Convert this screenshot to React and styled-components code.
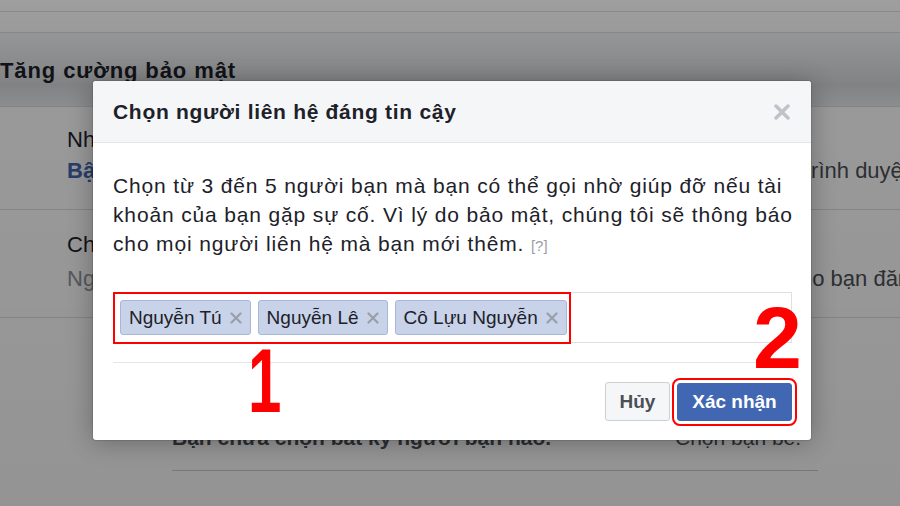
import React from "react";
import styled, { createGlobalStyle } from "styled-components";

const GlobalStyle = createGlobalStyle`
  html, body { margin: 0; padding: 0; }
  body { font-family: "Liberation Sans", Arial, sans-serif; background: #fff; }
  * { box-sizing: border-box; }
`;

const Page = styled.div`
  position: relative;
  width: 900px;
  height: 506px;
  overflow: hidden;
  background: #fff;
  color: #1d2129;
`;

const Settings = styled.div`
  display: flex;
  flex-direction: column;
`;

const Strip = styled.div`
  height: ${(p) => p.$h}px;
  border-bottom: 1px solid #dddfe2;
`;

const SectionHeading = styled.h2`
  margin: 0;
  height: 74px;
  padding-top: 25px;
  font-size: 22px;
  letter-spacing: 0.9px;
  line-height: 26px;
  font-weight: bold;
  color: #1d2129;
  border-bottom: 1px solid #dddfe2;
  background: linear-gradient(to bottom, #f6f7f9, #eceef1);
`;

const Row = styled.div`
  display: grid;
  grid-template-columns: ${(p) => p.$split}px 1fr;
  align-content: start;
  row-gap: ${(p) => p.$gap}px;
  padding: ${(p) => p.$pt}px 0 0 67px;
  height: ${(p) => p.$h}px;
  border-bottom: 1px solid #dddfe2;
  font-size: 22px;
  line-height: 28px;
  white-space: nowrap;
`;

const RowTitle = styled.div`
  grid-column: 1 / 3;
  color: #1d2129;
`;

const RowSub = styled.div`
  color: ${(p) => (p.$link ? "#4267b2" : "#90949c")};
  font-weight: ${(p) => (p.$link ? "bold" : "normal")};
  overflow: hidden;
`;

const RowAside = styled.div`
  color: #4b4f56;
`;

const Contacts = styled.div`
  padding: 0 82px 0 172px;
`;

const ContactsInner = styled.div`
  height: 153px;
  border-bottom: 1px solid #c9ccd1;
  display: grid;
  grid-template-columns: 503px 1fr;
  align-items: end;
  padding-bottom: 20px;
  font-size: 21px;
  white-space: nowrap;
`;

const Empty = styled.div`
  font-weight: bold;
  color: #4b4f56;
`;

const Pick = styled.div`
  color: #4b4f56;
`;

const Overlay = styled.div`
  position: absolute;
  inset: 0;
  background: linear-gradient(
    to bottom,
    rgba(0, 0, 0, 0.38) 0px,
    rgba(0, 0, 0, 0.4) 40px,
    rgba(0, 0, 0, 0.46) 85px,
    rgba(0, 0, 0, 0.4) 110px,
    rgba(0, 0, 0, 0.42) 506px
  );
`;

const Dialog = styled.div`
  position: absolute;
  left: 93px;
  top: 81px;
  width: 718px;
  height: 359px;
  background: #fff;
  border-radius: 3px;
  box-shadow: 0 2px 26px rgba(0, 0, 0, 0.3), 0 0 0 1px rgba(0, 0, 0, 0.1);
  display: flex;
  flex-direction: column;
`;

const Header = styled.div`
  height: 62px;
  flex: none;
  display: flex;
  align-items: center;
  justify-content: space-between;
  padding: 0 21px 0 20px;
  background: #f5f6f7;
  border-bottom: 1px solid #e5e5e5;
  border-radius: 3px 3px 0 0;
`;

const Title = styled.h3`
  margin: 0;
  font-size: 21px;
  letter-spacing: 0.7px;
  font-weight: bold;
  color: #1d2129;
  line-height: 26px;
`;

const Close = styled.button`
  border: 0;
  background: none;
  padding: 0;
  width: 16px;
  height: 16px;
  display: flex;
  cursor: pointer;
`;

const Body = styled.div`
  padding: 28px 19px 0 20px;
`;

const Text = styled.p`
  margin: 0;
  font-size: 21px;
  letter-spacing: 0.85px;
  line-height: 29px;
  color: #1d2129;
  white-space: nowrap;
`;

const Help = styled.span`
  font-size: 15px;
  letter-spacing: 0;
  color: #9a9ea6;
`;

const TokenBox = styled.div`
  position: relative;
  margin-top: 32px;
  height: 51px;
  border: 1px solid #dddfe2;
  display: flex;
  align-items: center;
  gap: 7px;
  padding: 0 6px;
`;

const Token = styled.span`
  display: inline-flex;
  align-items: center;
  gap: 8px;
  height: 35px;
  padding: 0 8px 0 8px;
  background: #c8d3ea;
  border: 1px solid #a6b7d8;
  border-radius: 3px;
  font-size: 19px;
  color: #1d2129;
  white-space: nowrap;
`;

const IconSvg = styled.svg`
  flex: none;
  display: block;
`;

const Highlight = styled.div`
  position: absolute;
  left: -1px;
  top: -1px;
  width: 458px;
  height: 52px;
  border: 2px solid #ff0000;
  pointer-events: none;
`;

const Divider = styled.div`
  margin: 19px 19px 0 20px;
  height: 1px;
  background: #e5e5e5;
`;

const Footer = styled.div`
  display: flex;
  justify-content: flex-end;
  gap: 7px;
  padding: 19px 19px 0 20px;
`;

const Button = styled.button`
  height: ${(p) => (p.$primary ? 38 : 39)}px;
  width: ${(p) => p.$w}px;
  margin-top: ${(p) => (p.$primary ? 1 : 0)}px;
  border-radius: 3px;
  border: 1px solid ${(p) => (p.$primary ? "#4267b2" : "#ccd0d5")};
  background: ${(p) => (p.$primary ? "#4267b2" : "#f5f6f7")};
  color: ${(p) => (p.$primary ? "#fff" : "#4b4f56")};
  font-family: "Liberation Sans", Arial, sans-serif;
  font-size: 19px;
  font-weight: bold;
  padding: 0;
  outline: ${(p) => (p.$marked ? "2px solid #ff0000" : "none")};
  outline-offset: 3px;
`;

const Mark = styled.span`
  position: absolute;
  left: ${(p) => p.$x}px;
  top: ${(p) => p.$y}px;
  font-size: ${(p) => p.$size}px;
  line-height: 1;
  font-weight: bold;
  color: #ff0000;
  pointer-events: none;
  transform: scaleX(${(p) => p.$sx || 1});
  transform-origin: left top;
`;

const XIcon = ({ size = 12, color = "#9a9ea6", stroke = 2.2 }) => (
  <IconSvg viewBox="0 0 12 12" width={size} height={size}>
    <path d="M1.5 1.5 L10.5 10.5 M10.5 1.5 L1.5 10.5" stroke={color} strokeWidth={stroke} strokeLinecap="round" />
  </IconSvg>
);

const contacts = ["Nguyễn Tú", "Nguyễn Lê", "Cô Lựu Nguyễn"];

export default function App() {
  return (
    <>
      <GlobalStyle />
      <Page>
        <Settings>
          <Strip $h={12} />
          <Strip $h={21} />
          <SectionHeading>Tăng cường bảo mật</SectionHeading>
          <Row $h={103} $pt={19} $split={738} $gap={3}>
            <RowTitle>Nhận cảnh báo về những lần đăng nhập không nhận ra</RowTitle>
            <RowSub $link>Bật</RowSub>
            <RowAside>trình duyệt mới</RowAside>
          </Row>
          <Row $h={108} $pt={21} $split={722} $gap={6}>
            <RowTitle>Chọn từ 3 đến 5 người bạn để liên hệ nếu bạn bị khóa</RowTitle>
            <RowSub>Người liên hệ tin cậy có thể gửi mã và URL để giúp bạn</RowSub>
            <RowAside>cho bạn đăng nhập</RowAside>
          </Row>
          <Contacts>
            <ContactsInner>
              <Empty>Bạn chưa chọn bất kỳ người bạn nào.</Empty>
              <Pick>Chọn bạn bè.</Pick>
            </ContactsInner>
          </Contacts>
        </Settings>
        <Overlay />
        <Dialog>
          <Header>
            <Title>Chọn người liên hệ đáng tin cậy</Title>
            <Close aria-label="Đóng">
              <XIcon size={16} color="#bec3c9" stroke={2.6} />
            </Close>
          </Header>
          <Body>
            <Text>
              Chọn từ 3 đến 5 người bạn mà bạn có thể gọi nhờ giúp đỡ nếu tài
              <br />
              khoản của bạn gặp sự cố. Vì lý do bảo mật, chúng tôi sẽ thông báo
              <br />
              cho mọi người liên hệ mà bạn mới thêm. <Help>[?]</Help>
            </Text>
            <TokenBox>
              {contacts.map((name) => (
                <Token key={name}>
                  {name}
                  <XIcon />
                </Token>
              ))}
              <Highlight />
            </TokenBox>
          </Body>
          <Divider />
          <Footer>
            <Button $w={65}>Hủy</Button>
            <Button $w={115} $primary $marked>
              Xác nhận
            </Button>
          </Footer>
          <Mark $x={155} $y={254} $size={91} $sx={0.66}>1</Mark>
          <Mark $x={660} $y={213} $size={88}>2</Mark>
        </Dialog>
      </Page>
    </>
  );
}
